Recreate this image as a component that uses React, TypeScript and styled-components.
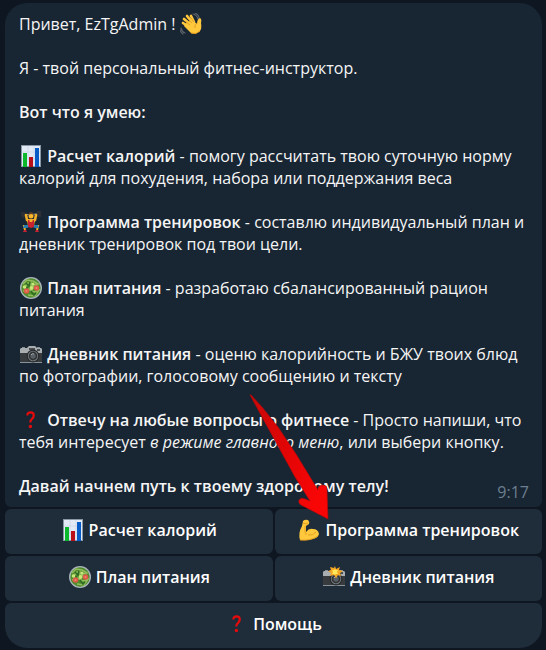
import React from "react";
import styled, { createGlobalStyle } from "styled-components";

const GlobalStyle = createGlobalStyle`
  * { box-sizing: border-box; }
  body {
    margin: 0;
    background: #0e1621;
    color: #f5f5f5;
    font-family: "Open Sans", "Noto Sans", sans-serif;
    font-size: 16px;
    line-height: 22px;
  }
`;

const Chat = styled.main`
  display: flex;
  flex-direction: column;
  gap: 2px;
  padding: 3px 4px 2px 5px;
`;

const Bubble = styled.article`
  position: relative;
  padding: 10px 13px 10px 14px;
  border-radius: 22px 22px 6px 6px;
  background: #182533;
`;

const Paragraph = styled.p`
  margin: 0 0 22px;
`;

const Closing = styled.footer`
  display: flex;
  justify-content: space-between;
  align-items: flex-start;
`;

const Strong = styled.strong`
  font-weight: 600;
`;

const Time = styled.time`
  height: 16px;
  margin-top: 6px;
  color: #6d7f8f;
`;

const Keyboard = styled.nav`
  display: grid;
  grid-template-columns: 1fr 1fr;
  gap: 2px;
`;

const KeyButton = styled.button<{ $wide?: boolean }>`
  display: flex;
  align-items: center;
  justify-content: center;
  gap: 4px;
  height: 45px;
  padding: 0 8px 3px;
  grid-column: ${(p) => (p.$wide ? "1 / -1" : "auto")};
  border: 0;
  border-radius: ${(p) => (p.$wide ? "6px 6px 22px 22px" : "6px")};
  background: #1f2c39;
  color: #ffffff;
  font: inherit;
  font-weight: 600;
  white-space: nowrap;
  cursor: pointer;
`;

const Glyph = styled.svg`
  display: inline-block;
  flex: none;
  width: 24px;
  height: 22px;
  vertical-align: top;
`;

const Arrow = styled.svg`
  position: absolute;
  z-index: 1;
  left: 244px;
  bottom: -14px;
  width: 82px;
  height: 128px;
  pointer-events: none;
`;

function Wave() {
  return (
    <Glyph viewBox="0 0 24 22" aria-hidden="true">
      <g fill="none" stroke="#59626a" strokeWidth="1.2" strokeLinecap="round">
        <path d="M13 1q4 1 5 5M15 0q4 2 4 5M1 15q1 4 4 5M0 17q1 3 3 4" />
      </g>
      <g fill="none" stroke="#ffc83d" strokeWidth="2.7" strokeLinecap="round">
        <path d="M10 11 4 6M12 9 7 3M14 9 11 3M9 14 3 10" />
      </g>
      <path d="M5 11 8 9l4-2 5 4q0-5 3-6 2 1 1 5 1 5-1 8-4 4-9 2L4 13z" fill="#ffc83d" />
      <path d="m5 8 5 4M7 5l5 5M10 4l4 5M17 10q-3 2-2 5" fill="none" stroke="#d58b18" strokeWidth=".7" />
      <path d="M11 20q5 2 9-2" fill="none" stroke="#e59b20" strokeWidth="1" />
    </Glyph>
  );
}

function Chart() {
  return (
    <Glyph viewBox="0 0 24 22" aria-hidden="true">
      <path d="M2 0h20v22H2z" fill="#8996a6" />
      <path d="M3 1h18v20H3z" fill="#e2eaf5" />
      <path d="M3 7h18M3 14h18M9 1v20M15 1v20" stroke="#c8d2e2" strokeWidth=".6" />
      <path d="M4 8h4v14H4z" fill="#0bb82b" />
      <path d="M10 12h4v10h-4z" fill="#b80f19" />
      <path d="M16 3h4v19h-4z" fill="#075bc6" />
    </Glyph>
  );
}

function Lifter() {
  return (
    <Glyph viewBox="0 0 24 22" aria-hidden="true">
      <path d="M3 4q9-1 18-1" fill="none" stroke="#87939a" strokeWidth="1" />
      <path d="m3 2 1 4M5 2l1 3M19 1l0 4M21 0l0 5" stroke="#2d3034" strokeWidth="2.4" strokeLinecap="round" />
      <path d="m7 4 1 5 3 2h2l3-2 1-5" fill="none" stroke="#f1ae28" strokeWidth="2.6" strokeLinecap="round" strokeLinejoin="round" />
      <path d="M8 8h8l-1 8H9z" fill="#f1ae28" />
      <circle cx="12" cy="5" r="2.5" fill="#f7b52b" />
      <path d="M9.5 4q0-3 2.5-3t2.5 3q-2-2-5 0" fill="#5a3b28" />
      <path d="m9 9 1 0 1 2h2l1-2 1 0 0 7H9z" fill="#c6222f" />
      <path d="m9 15-4 0 1 4M15 15l4 0-1 4" fill="none" stroke="#f1ae28" strokeWidth="2" />
      <path d="m9 14-4 0-1 3 4 0 2-1zM15 14l4 0 1 3-4 0-2-1z" fill="#267db0" />
      <path d="m9 13h6l0 3-3 1-3-1z" fill="#c6222f" />
      <path d="M4 21h4l-1-2H5zM16 21h4l-1-2h-2z" fill="#c6222f" />
    </Glyph>
  );
}

function Salad() {
  return (
    <Glyph viewBox="0 0 24 22" aria-hidden="true">
      <circle cx="12" cy="11" r="11" fill="#aab4ba" />
      <circle cx="12" cy="11" r="9.7" fill="#4f8c2c" />
      <path d="m4 7 4-4 6 1 5 3-5 1-5-2-4 5M4 14l5-2 6 3 5-2-4 6-7-1M12 3v7l7-1" fill="none" stroke="#93bd5c" strokeWidth="1.5" />
      <path d="m7 6 3 3 1-4M12 14l3 4 2-2M5 10l4 1" fill="none" stroke="#306c23" strokeWidth="1.6" />
      <circle cx="7.5" cy="14" r="2.8" fill="#db5945" /><circle cx="17.5" cy="11" r="2.8" fill="#db5945" />
      <g fill="#c8e878"><circle cx="5.5" cy="10" r="1.8" /><circle cx="12.5" cy="11" r="2" /><circle cx="14" cy="7" r="1.5" /></g>
      <g fill="#f0836b"><circle cx="7.5" cy="14" r="1.1" /><circle cx="17.5" cy="11" r="1.1" /></g>
    </Glyph>
  );
}

function Camera({ flash = false }: { flash?: boolean }) {
  return (
    <Glyph viewBox="0 0 24 22" aria-hidden="true">
      <path d="M1 6 2 5h6l2-2h6l2 2h4l1 1v14H1z" fill="#383b3d" />
      <path d="M1 6 2 5h6l2-2h6l2 2h4l1 1v4H1z" fill="#a9aeb0" />
      <path d="M3 4h3v1H3zM18 4h3v1h-3z" fill="#858e93" />
      <path d="M10 5h6v2h-6zM18 6h3v2h-3z" fill="#4a4e51" />
      <path d="M1 19h22v1H1z" fill="#899297" />
      <circle cx="14" cy="13" r="6.4" fill="#272a2c" />
      <circle cx="14" cy="13" r="5.2" fill="#7b8184" />
      <circle cx="14" cy="13" r="4.4" fill="#303437" />
      <circle cx="14" cy="13" r="2.7" fill="#596065" />
      <path d="M12 12q1-2 3-1" fill="none" stroke="#a9b1b5" strokeWidth=".9" />
      {flash && (
        <>
          <path d="m13 0 1 3 4-2-1 3 4 1-3 2 1 3-3-1-2 3-2-3-4 1 1-3-3-2 3-1-1-3 4 1z" fill="#f5a623" />
          <path d="m13 3 1 1 2 0-1 2 1 2-2 0-1 1-1-1-2 0 1-2-1-2 2 0z" fill="#ffe75a" />
        </>
      )}
    </Glyph>
  );
}

function Question() {
  return (
    <Glyph viewBox="0 0 24 22" aria-hidden="true">
      <path d="M8.4 6.5Q8.3 3.5 11.5 3.4q3.3.1 3.2 3 0 2-1.8 3.6-1.6 1.4-1.6 3.6" fill="none" stroke="#e30b0b" strokeWidth="2.3" />
      <circle cx="11.4" cy="17.5" r="1.7" fill="#e30b0b" />
    </Glyph>
  );
}

function Muscle() {
  return (
    <Glyph viewBox="0 0 24 22" aria-hidden="true">
      <path d="M6 2q2-2 5-1 2 2 1 4L9 7v6q3-4 7-3 5 0 6 5-1 4-6 5-6 2-13 1Q1 14 5 7z" fill="#ffc83d" />
      <path d="m6 4 3 1 2-1M8 7l0 6q1 1 1 3M11 16q5 1 8-3M3 21q11 1 18-4" fill="none" stroke="#e19b1e" strokeWidth=".9" />
    </Glyph>
  );
}

export default function App() {
  return (
    <>
      <GlobalStyle />
      <Chat>
        <Bubble>
          <Paragraph>Привет, EzTgAdmin ! <Wave /></Paragraph>
          <Paragraph>Я - твой персональный фитнес-инструктор.</Paragraph>
          <Paragraph><Strong>Вот что я умею:</Strong></Paragraph>
          <Paragraph><Chart /> <Strong>Расчет калорий</Strong> - помогу рассчитать твою суточную норму калорий для похудения, набора или поддержания веса</Paragraph>
          <Paragraph><Lifter /> <Strong>Программа тренировок</Strong> - составлю индивидуальный план и дневник тренировок под твои цели.</Paragraph>
          <Paragraph><Salad /> <Strong>План питания</Strong> - разработаю сбалансированный рацион питания</Paragraph>
          <Paragraph><Camera /> <Strong>Дневник питания</Strong> - оценю калорийность и БЖУ твоих блюд по фотографии, голосовому сообщению и тексту</Paragraph>
          <Paragraph><Question /> <Strong>Отвечу на любые вопросы о фитнесе</Strong> - Просто напиши, что тебя интересует <em>в режиме главного меню</em>, или выбери кнопку.</Paragraph>
          <Closing>
            <Strong>Давай начнем путь к твоему здоровому телу!</Strong>
            <Time dateTime="09:17">9:17</Time>
          </Closing>
          <Arrow viewBox="249 393 82 128" aria-hidden="true">
            <defs>
              <linearGradient id="arrowRed" x1="0" y1="0" x2="1" y2="0.6">
                <stop offset="0" stopColor="#c90909" />
                <stop offset="0.5" stopColor="#e00505" />
                <stop offset="1" stopColor="#f80606" />
              </linearGradient>
            </defs>
            <path d="M250 395q1-1 2 1L262 407 278 427 296 454 318 490V488q1-3 5-3 4 0 4 4L328 519 301 505q-3-2-2-5 2-3 6-1L310 501 295 477 278 446 262 417z" fill="url(#arrowRed)" stroke="#b20909" strokeWidth=".6" strokeLinejoin="round" />
          </Arrow>
        </Bubble>
        <Keyboard aria-label="Меню">
          <KeyButton type="button"><Chart />Расчет калорий</KeyButton>
          <KeyButton type="button"><Muscle />Программа тренировок</KeyButton>
          <KeyButton type="button"><Salad />План питания</KeyButton>
          <KeyButton type="button"><Camera flash />Дневник питания</KeyButton>
          <KeyButton type="button" $wide><Question />Помощь</KeyButton>
        </Keyboard>
      </Chat>
    </>
  );
}
